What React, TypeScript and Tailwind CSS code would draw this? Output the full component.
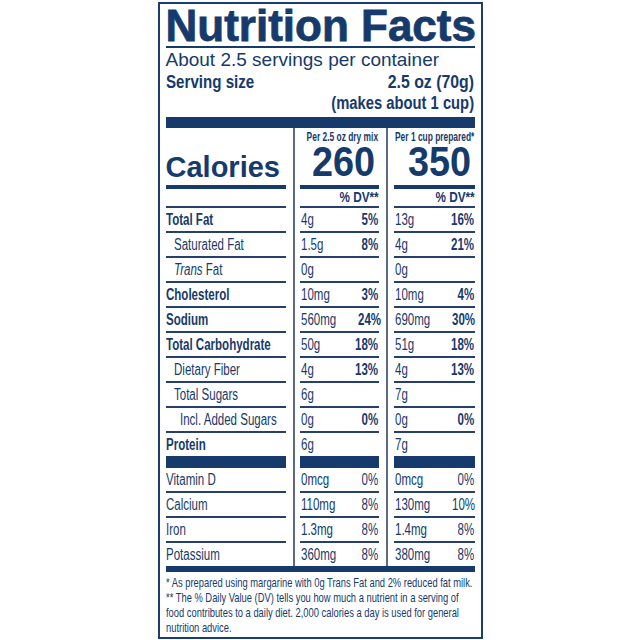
import React from "react";

const SANS = "font-['Liberation_Sans',Arial,sans-serif]";

type Nutrient = {
  name: React.ReactNode;
  level: 0 | 1 | 2;
  dry: string;
  dryDv?: string;
  prep: string;
  prepDv?: string;
};

const nutrients: Nutrient[] = [
  { name: "Total Fat", level: 0, dry: "4g", dryDv: "5%", prep: "13g", prepDv: "16%" },
  { name: "Saturated Fat", level: 1, dry: "1.5g", dryDv: "8%", prep: "4g", prepDv: "21%" },
  { name: <><i>Trans</i> Fat</>, level: 1, dry: "0g", prep: "0g" },
  { name: "Cholesterol", level: 0, dry: "10mg", dryDv: "3%", prep: "10mg", prepDv: "4%" },
  { name: "Sodium", level: 0, dry: "560mg", dryDv: "24%", prep: "690mg", prepDv: "30%" },
  { name: "Total Carbohydrate", level: 0, dry: "50g", dryDv: "18%", prep: "51g", prepDv: "18%" },
  { name: "Dietary Fiber", level: 1, dry: "4g", dryDv: "13%", prep: "4g", prepDv: "13%" },
  { name: "Total Sugars", level: 1, dry: "6g", prep: "7g" },
  { name: "Incl. Added Sugars", level: 2, dry: "0g", dryDv: "0%", prep: "0g", prepDv: "0%" },
  { name: "Protein", level: 0, dry: "6g", prep: "7g" },
];

const vitamins = [
  { name: "Vitamin D", dry: "0mcg", dryDv: "0%", prep: "0mcg", prepDv: "0%" },
  { name: "Calcium", dry: "110mg", dryDv: "8%", prep: "130mg", prepDv: "10%" },
  { name: "Iron", dry: "1.3mg", dryDv: "8%", prep: "1.4mg", prepDv: "8%" },
  { name: "Potassium", dry: "360mg", dryDv: "8%", prep: "380mg", prepDv: "8%" },
];

// the label's type is a condensed face; squeeze Liberation Sans to match
const Cond = ({ right, className = "", children }: { right?: boolean; className?: string; children: React.ReactNode }) => (
  <span className={`inline-block whitespace-nowrap ${right ? "origin-right" : "origin-left"} ${className}`}>{children}</span>
);

// one table line; the last one in a block has no rule under it
const Row = ({ last, className = "", children }: { last?: boolean; className?: string; children: React.ReactNode }) => (
  <div
    className={`${SANS} flex items-start justify-between whitespace-nowrap pt-[1px] text-[16px] leading-[22px] ${
      last ? "h-[23px]" : "h-[25px] border-b-2 border-[#24406b]"
    } ${className}`}
  >
    {children}
  </div>
);

const Bar = ({ className = "" }: { className?: string }) => <div className={`bg-[#163a6b] ${className}`} />;

const AmountColumn = ({
  label,
  calories,
  width,
  which,
}: {
  label: string;
  calories: string;
  width: string;
  which: "dry" | "prep";
}) => (
  <div className={`flex flex-col ${width}`}>
    <div className={`${SANS} flex h-[57px] flex-col items-end justify-end pb-[5px] font-bold`}>
      <p className="h-[13px] text-[12px] leading-[13px]">
        <Cond right className="scale-x-[0.7]">{label}</Cond>
      </p>
      <p className="h-[36px] pr-[3px] text-[42px] leading-[36px]">
        <Cond right className="scale-x-[0.9]">{calories}</Cond>
      </p>
    </div>
    <Bar className="h-[4px]" />
    <div className={`${SANS} h-[19px] border-b-2 border-[#24406b] text-right text-[14px] font-bold leading-[17px]`}>
      <Cond right className="scale-x-[0.84]">% DV**</Cond>
    </div>
    {nutrients.map((n, i) => (
      <Row key={i} last={i === nutrients.length - 1}>
        <Cond className="ml-[1px] scale-x-[0.72]">{which === "dry" ? n.dry : n.prep}</Cond>
        <Cond right className="scale-x-[0.72] font-bold">{which === "dry" ? n.dryDv : n.prepDv}</Cond>
      </Row>
    ))}
    <Bar className="h-[12px]" />
    {vitamins.map((v, i) => (
      <Row key={v.name} last={i === vitamins.length - 1}>
        <Cond className="ml-[1px] scale-x-[0.72]">{which === "dry" ? v.dry : v.prep}</Cond>
        <Cond right className="scale-x-[0.72]">{which === "dry" ? v.dryDv : v.prepDv}</Cond>
      </Row>
    ))}
  </div>
);

export default function App() {
  return (
    <div className="flex h-[640px] w-[640px] justify-center bg-white pt-[2px] text-[#163a6b]">
      <div className="h-[637px] w-[325px] overflow-hidden border-2 border-[#1d3d6e] px-[6px]">
        <h1
          className={`${SANS} pt-[2px] text-[44px] font-bold leading-[40px] whitespace-nowrap [-webkit-text-stroke:0.8px_#163a6b]`}
        >
          Nutrition Facts
        </h1>
        <div className="h-[1.5px] bg-[#163a6b]" />
        <p className={`${SANS} h-[23px] text-[19px] leading-[23px] whitespace-nowrap`}>
          About 2.5 servings per container
        </p>
        <div className={`${SANS} flex h-[22px] justify-between text-[18px] font-bold leading-[22px]`}>
          <Cond className="scale-x-[0.84]">Serving size</Cond>
          <Cond right className="scale-x-[0.88]">2.5 oz (70g)</Cond>
        </div>
        <p className={`${SANS} h-[20px] text-right text-[18px] font-bold leading-[20px]`}>
          <Cond right className="scale-x-[0.82]">(makes about 1 cup)</Cond>
        </p>
        <Bar className="mt-[4.5px] h-[11px]" />

        <div className="flex">
          <div className="flex w-[120px] flex-col">
            <div className="flex h-[57px] items-end pb-[3px]">
              <p className={`${SANS} text-[29px] font-bold leading-[30px]`}>Calories</p>
            </div>
            <Bar className="h-[4px]" />
            <div className="h-[19px] border-b-2 border-[#24406b]" />
            {nutrients.map((n, i) => (
              <Row
                key={i}
                last={i === nutrients.length - 1}
                className={`${n.level === 0 ? "font-bold" : ""} ${
                  n.level === 1 ? "pl-[8px]" : n.level === 2 ? "pl-[14px]" : ""
                }`}
              >
                <Cond className="scale-x-[0.72]">{n.name}</Cond>
              </Row>
            ))}
            <Bar className="h-[12px]" />
            {vitamins.map((v, i) => (
              <Row key={v.name} last={i === vitamins.length - 1}>
                <Cond className="scale-x-[0.72]">{v.name}</Cond>
              </Row>
            ))}
          </div>

          <div className="ml-[7px] mr-[5px] w-[2px] bg-[#5d6b82]" />
          <AmountColumn label="Per 2.5 oz dry mix" calories="260" width="w-[79px]" which="dry" />
          <div className="ml-[7px] mr-[6px] w-[2px] bg-[#5d6b82]" />
          <AmountColumn label="Per 1 cup prepared*" calories="350" width="w-[81px]" which="prep" />
        </div>

        <Bar className="h-[6px]" />
        <div className={`${SANS} w-max origin-left scale-x-[0.72] pt-[3px] text-[13px] leading-[15px] whitespace-nowrap`}>
          <p>* As prepared using margarine with 0g Trans Fat and 2% reduced fat milk.</p>
          <p>
            ** The % Daily Value (DV) tells you how much a nutrient in a serving of
            <br />
            food contributes to a daily diet. 2,000 calories a day is used for general
            <br />
            nutrition advice.
          </p>
        </div>
      </div>
    </div>
  );
}
